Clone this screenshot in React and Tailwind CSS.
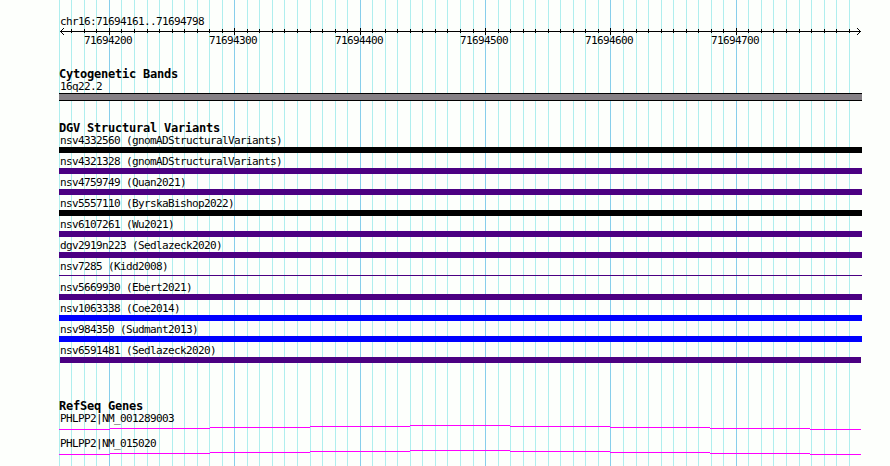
import React from "react";

const GRID = [
  59, 71, 84, 96, 109, 121, 134, 147, 159, 172, 184, 197, 209, 222, 234, 247,
  259, 272, 284, 297, 310, 322, 335, 347, 360, 372, 385, 397, 410, 422, 435,
  447, 460, 473, 485, 498, 510, 523, 535, 548, 560, 573, 585, 598, 610, 623,
  636, 648, 661, 673, 686, 698, 711, 723, 736, 748, 761, 773, 786, 799, 811,
  824, 836, 849,
];

const MAJOR = [109, 234, 360, 485, 610, 736];

const POSITIONS = [
  "71694200",
  "71694300",
  "71694400",
  "71694500",
  "71694600",
  "71694700",
];

const VARIANTS = [
  { name: "nsv4332560 (gnomADStructuralVariants)", bar: "h-1.5 bg-black" },
  { name: "nsv4321328 (gnomADStructuralVariants)", bar: "h-1.5 bg-[#4b0082]" },
  { name: "nsv4759749 (Quan2021)", bar: "h-1.5 bg-[#4b0082]" },
  { name: "nsv5557110 (ByrskaBishop2022)", bar: "h-1.5 bg-black" },
  { name: "nsv6107261 (Wu2021)", bar: "h-1.5 bg-[#4b0082]" },
  { name: "dgv2919n223 (Sedlazeck2020)", bar: "h-1.5 bg-[#4b0082]" },
  { name: "nsv7285 (Kidd2008)", bar: "h-px mt-0.5 bg-[#4b0082]" },
  { name: "nsv5669930 (Ebert2021)", bar: "h-1.5 bg-[#4b0082]" },
  { name: "nsv1063338 (Coe2014)", bar: "h-1.5 bg-[#0000ff]" },
  { name: "nsv984350 (Sudmant2013)", bar: "h-1.5 bg-[#0000ff]" },
  { name: "nsv6591481 (Sedlazeck2020)", bar: "h-1.5 mx-px bg-[#4b0082]" },
];

const GENES = ["PHLPP2|NM_001289003", "PHLPP2|NM_015020"];

export default function App() {
  return (
    <div className="relative w-[890px] h-[466px] overflow-hidden bg-[#fdfffc] text-black font-['DejaVu_Sans_Mono',monospace]">
      <GridLines />

      <div className="relative pl-[59px] w-[862px] pt-[15px]">
        {/* RULER */}
        <Label>chr16:71694161..71694798</Label>
        <Ruler />

        {/* CYTOBANDS */}
        <div className="pt-[19px]">
          <Heading>Cytogenetic Bands</Heading>
          <div className="h-[13px]">
            <Label>16q22.2</Label>
          </div>
          <div className="h-2 border-y border-black bg-[#858085]" />
        </div>

        {/* VARIANTS */}
        <div className="pt-[21px]">
          <Heading>DGV Structural Variants</Heading>
          {VARIANTS.map((v) => (
            <div key={v.name} className="h-[21px]">
              <div className="h-[13px]">
                <Label>{v.name}</Label>
              </div>
              <div className="flow-root">
                <div className={v.bar} />
              </div>
            </div>
          ))}
        </div>

        {/* GENES */}
        <div className="pt-[35px]">
          <Heading>RefSeq Genes</Heading>
          {GENES.map((name) => (
            <div key={name} className="h-[25px]">
              <div className="h-[13px]">
                <Label>{name}</Label>
              </div>
              <Transcript />
            </div>
          ))}
        </div>
      </div>
    </div>
  );
}

function Label({ children }) {
  return (
    <div className="pl-px h-3 text-[11px] leading-[14px] tracking-[-0.622px] whitespace-pre">
      {children}
    </div>
  );
}

function Heading({ children }) {
  return (
    <div className="h-3 text-xs leading-3 font-bold tracking-[-0.224px] whitespace-pre">
      {children}
    </div>
  );
}

function GridLines() {
  return (
    <svg
      className="absolute inset-0"
      width="890"
      height="466"
      shapeRendering="crispEdges"
    >
      {GRID.map((x) => (
        <rect
          key={x}
          x={x}
          y="0"
          width="1"
          height="466"
          fill={MAJOR.includes(x) ? "#87ceeb" : "#afeeee"}
        />
      ))}
    </svg>
  );
}

function Ruler() {
  return (
    <div className="h-[22px] pt-px">
      <svg
        className="block"
        width="803"
        height="7"
        viewBox="59 28 803 7"
        shapeRendering="crispEdges"
      >
        <rect x="60" y="31" width="801" height="1" />
        {GRID.slice(1).map((x) =>
          MAJOR.includes(x) ? (
            <rect key={x} x={x} y="28" width="1" height="7" />
          ) : (
            <rect key={x} x={x} y="29" width="1" height="4" />
          ),
        )}
        {/* arrow heads */}
        {[1, 2, 3].map((d) => (
          <g key={d}>
            <rect x={60 + d} y={31 - d} width="1" height="1" />
            <rect x={60 + d} y={31 + d} width="1" height="1" />
            <rect x={860 - d} y={31 - d} width="1" height="1" />
            <rect x={860 - d} y={31 + d} width="1" height="1" />
          </g>
        ))}
      </svg>
      <div className="flex -mt-px pl-6">
        {POSITIONS.map((p, i) => (
          <div
            key={p}
            className="shrink-0"
            style={{ width: (MAJOR[i + 1] ?? 861) - MAJOR[i] }}
          >
            <Label>{p}</Label>
          </div>
        ))}
      </div>
    </div>
  );
}

// hat shaped intron line, one pixel step every 100px
function Transcript() {
  return (
    <svg
      className="block"
      width="803"
      height="5"
      viewBox="0 0 803 5"
      shapeRendering="crispEdges"
    >
      {[4, 3, 2, 1, 0, 1, 2, 3, 4].map((y, i) => {
        const start = i === 0 ? 0 : i * 100 - 49;
        const end = Math.min(i * 100 + 51, 802);
        return (
          <rect
            key={i}
            x={start}
            y={y}
            width={end - start}
            height="1"
            fill="#ff00ff"
          />
        );
      })}
    </svg>
  );
}
